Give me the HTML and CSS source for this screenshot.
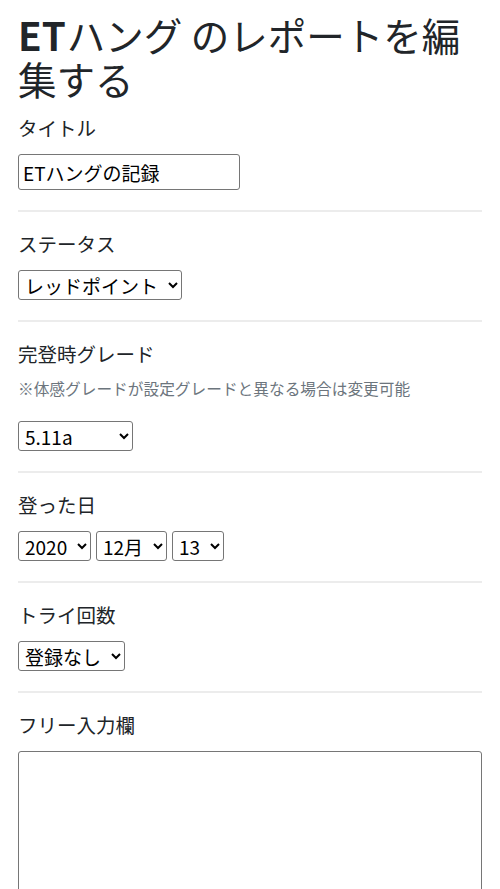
FILE: index.html
```html
<!DOCTYPE html>
<html lang="ja">
<head>
<meta charset="utf-8">
<link rel="stylesheet" href="styles.css">
</head>
<body>
<main class="page">
  <h1 class="title"><span class="latin">ET</span><span>ハング のレポートを編</span><br><span>集する</span></h1>
  <form class="form">
    <div class="field">
      <label class="label">タイトル</label>
      <input class="text-input" type="text" value="ETハングの記録">
    </div>
    <hr class="sep">
    <div class="field">
      <label class="label">ステータス</label>
      <div class="row">
        <select class="sel"><option>レッドポイント</option></select>
      </div>
    </div>
    <hr class="sep">
    <div class="field">
      <label class="label label-noted">完登時グレード</label>
      <p class="note">※体感グレードが設定グレードと異なる場合は変更可能</p>
      <div class="row">
        <select class="sel sel-grade"><option>5.11a</option></select>
      </div>
    </div>
    <hr class="sep">
    <div class="field">
      <label class="label">登った日</label>
      <div class="row">
        <select class="sel"><option>2020</option></select>
        <select class="sel"><option>12月</option></select>
        <select class="sel"><option>13</option></select>
      </div>
    </div>
    <hr class="sep">
    <div class="field">
      <label class="label">トライ回数</label>
      <div class="row">
        <select class="sel"><option>登録なし</option></select>
      </div>
    </div>
    <hr class="sep">
    <div class="field">
      <label class="label">フリー入力欄</label>
      <textarea class="area"></textarea>
    </div>
  </form>
</main>
</body>
</html>
```

FILE: styles.css
```css
* { box-sizing: border-box; }
html, body { margin: 0; padding: 0; background: #fff; }
body {
  font-family: "Noto Sans CJK JP", "Noto Sans", sans-serif;
  color: #212529;
}
.page {
  padding: 12px 18px 0;
}
.title {
  margin: 0 0 14px;
  font-size: 38.5px;
  line-height: 44px;
  font-weight: 400;
}
.title .latin { font-weight: 700; margin-right: 1px; }
.form { display: flex; flex-direction: column; }
.field { display: flex; flex-direction: column; align-items: flex-start; }
.label {
  font-size: 19.5px;
  line-height: 28px;
  margin-bottom: 12px;
}
.label-noted { margin-bottom: 10px; }
.note {
  margin: 0 0 21px;
  font-size: 15.7px;
  line-height: 22px;
  color: #6c757d;
}
.text-input {
  width: 222px;
  height: 36px;
  font: inherit;
  font-size: 19px;
  padding: 0 4px;
  border: 1px solid #767676;
  border-radius: 3px;
  color: #000;
}
.row { display: flex; gap: 5px; }
.sel {
  font-family: "Noto Sans CJK JP", "Noto Sans", sans-serif;
  font-size: 19px;
  height: 30px;
  padding: 0 6px 0 2px;
  border: 1px solid #767676;
  border-radius: 3px;
  background: #fff;
  color: #000;
}
.sel-grade { width: 115px; }
.sep {
  width: 100%;
  margin: 20px 0 18px;
  border: 0;
  border-top: 2px solid #ececec;
}
.area {
  width: 464px;
  height: 150px;
  border: 1px solid #767676;
  border-radius: 3px;
  resize: vertical;
}
```
